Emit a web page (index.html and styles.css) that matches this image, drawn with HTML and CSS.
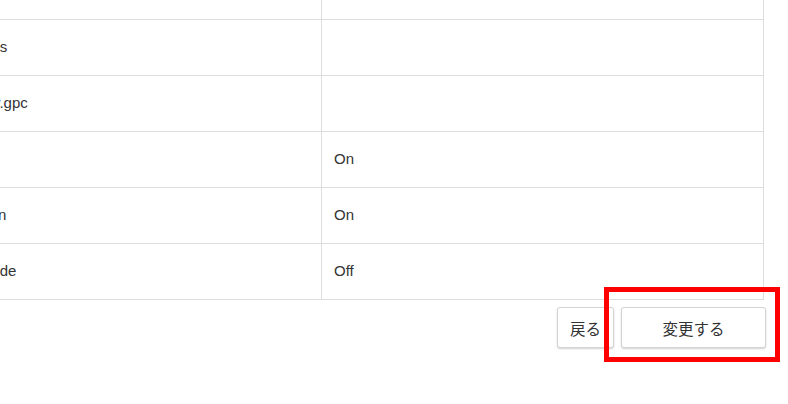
FILE: index.html
```html
<!DOCTYPE html>
<html lang="ja">
<head>
<meta charset="utf-8">
<title>設定</title>
<link rel="stylesheet" href="styles.css">
</head>
<body>
<div class="page">
  <div class="settings">
    <div class="row"><div class="key">Name</div><div class="val"></div></div>
    <div class="row"><div class="key">Cookies</div><div class="val"></div></div>
    <div class="row"><div class="key">privacy.gpc</div><div class="val"></div></div>
    <div class="row"><div class="key">DNT</div><div class="val">On</div></div>
    <div class="row"><div class="key">Position</div><div class="val">On</div></div>
    <div class="row"><div class="key">Kid mode</div><div class="val">Off</div></div>
  </div>
  <div class="actions">
    <button class="btn btn-back" type="button">戻る</button>
    <button class="btn btn-submit" type="button">変更する</button>
  </div>
  <div class="highlight"></div>
</div>
</body>
</html>
```
FILE: styles.css
```css
* { box-sizing: border-box; }
html, body {
  margin: 0;
  padding: 0;
  background: #ffffff;
  overflow: hidden;
}
body {
  font-family: "Liberation Sans", Arial, "Noto Sans CJK JP", sans-serif;
  font-size: 15px;
  color: #333333;
}
.page {
  position: relative;
  width: 788px;
  height: 404px;
  overflow: hidden;
}
.settings {
  width: 824px;
  margin-left: -60px;
  margin-top: -37px;
  border: 1px solid #dddddd;
  border-bottom: none;
}
.row {
  display: grid;
  grid-template-columns: 381px 1fr;
  height: 56px;
  border-bottom: 1px solid #dddddd;
}
.key, .val {
  display: flex;
  align-items: center;
  white-space: nowrap;
  padding-bottom: 2px;
}
.key {
  padding-left: 12px;
  border-right: 1px solid #dddddd;
}
.val {
  padding-left: 12px;
}
.actions {
  display: flex;
  justify-content: flex-end;
  gap: 7px;
  width: 766px;
  margin-top: 7px;
}
.btn {
  height: 41px;
  background: #ffffff;
  border: 1px solid #d4d4d4;
  border-radius: 3px;
  box-shadow: 0 1px 2px rgba(0, 0, 0, 0.18);
  font-family: "Noto Sans CJK JP", "Liberation Sans", sans-serif;
  font-size: 15.5px;
  color: #333333;
  padding: 0;
  cursor: pointer;
}
.btn-back { width: 57px; }
.btn-submit { width: 145px; }
.highlight {
  position: absolute;
  left: 604px;
  top: 287px;
  width: 176px;
  height: 75px;
  border: 5px solid #ff0000;
}
```
